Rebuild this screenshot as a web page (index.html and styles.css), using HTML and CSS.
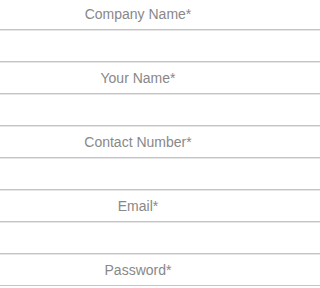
FILE: index.html
```html
<!DOCTYPE html>
<html>
<head>
<meta charset="utf-8">
<link rel="stylesheet" href="styles.css">
</head>
<body>
<form class="form">
  <div class="row"><span class="label">Company Name*</span></div>
  <div class="row"></div>
  <div class="row"><span class="label">Your Name*</span></div>
  <div class="row"></div>
  <div class="row"><span class="label">Contact Number*</span></div>
  <div class="row"></div>
  <div class="row"><span class="label">Email*</span></div>
  <div class="row"></div>
  <div class="row"><span class="label">Password*</span></div>
</form>
</body>
</html>
```
FILE: styles.css
```css
html, body {
  margin: 0;
  padding: 0;
  background: #ffffff;
  overflow: hidden;
}
.form {
  display: flex;
  flex-direction: column;
  margin-top: -2px;
}
.row {
  height: 31px;
  border-bottom: 1px solid #c4c4c4;
  box-shadow: 0 1px 0 #e6e6e6;
  display: flex;
  align-items: center;
  justify-content: flex-start;
}
.label {
  width: 276px;
  text-align: center;
  font-family: "Liberation Sans", Arial, sans-serif;
  font-size: 14px;
  color: #888888;
}
```
